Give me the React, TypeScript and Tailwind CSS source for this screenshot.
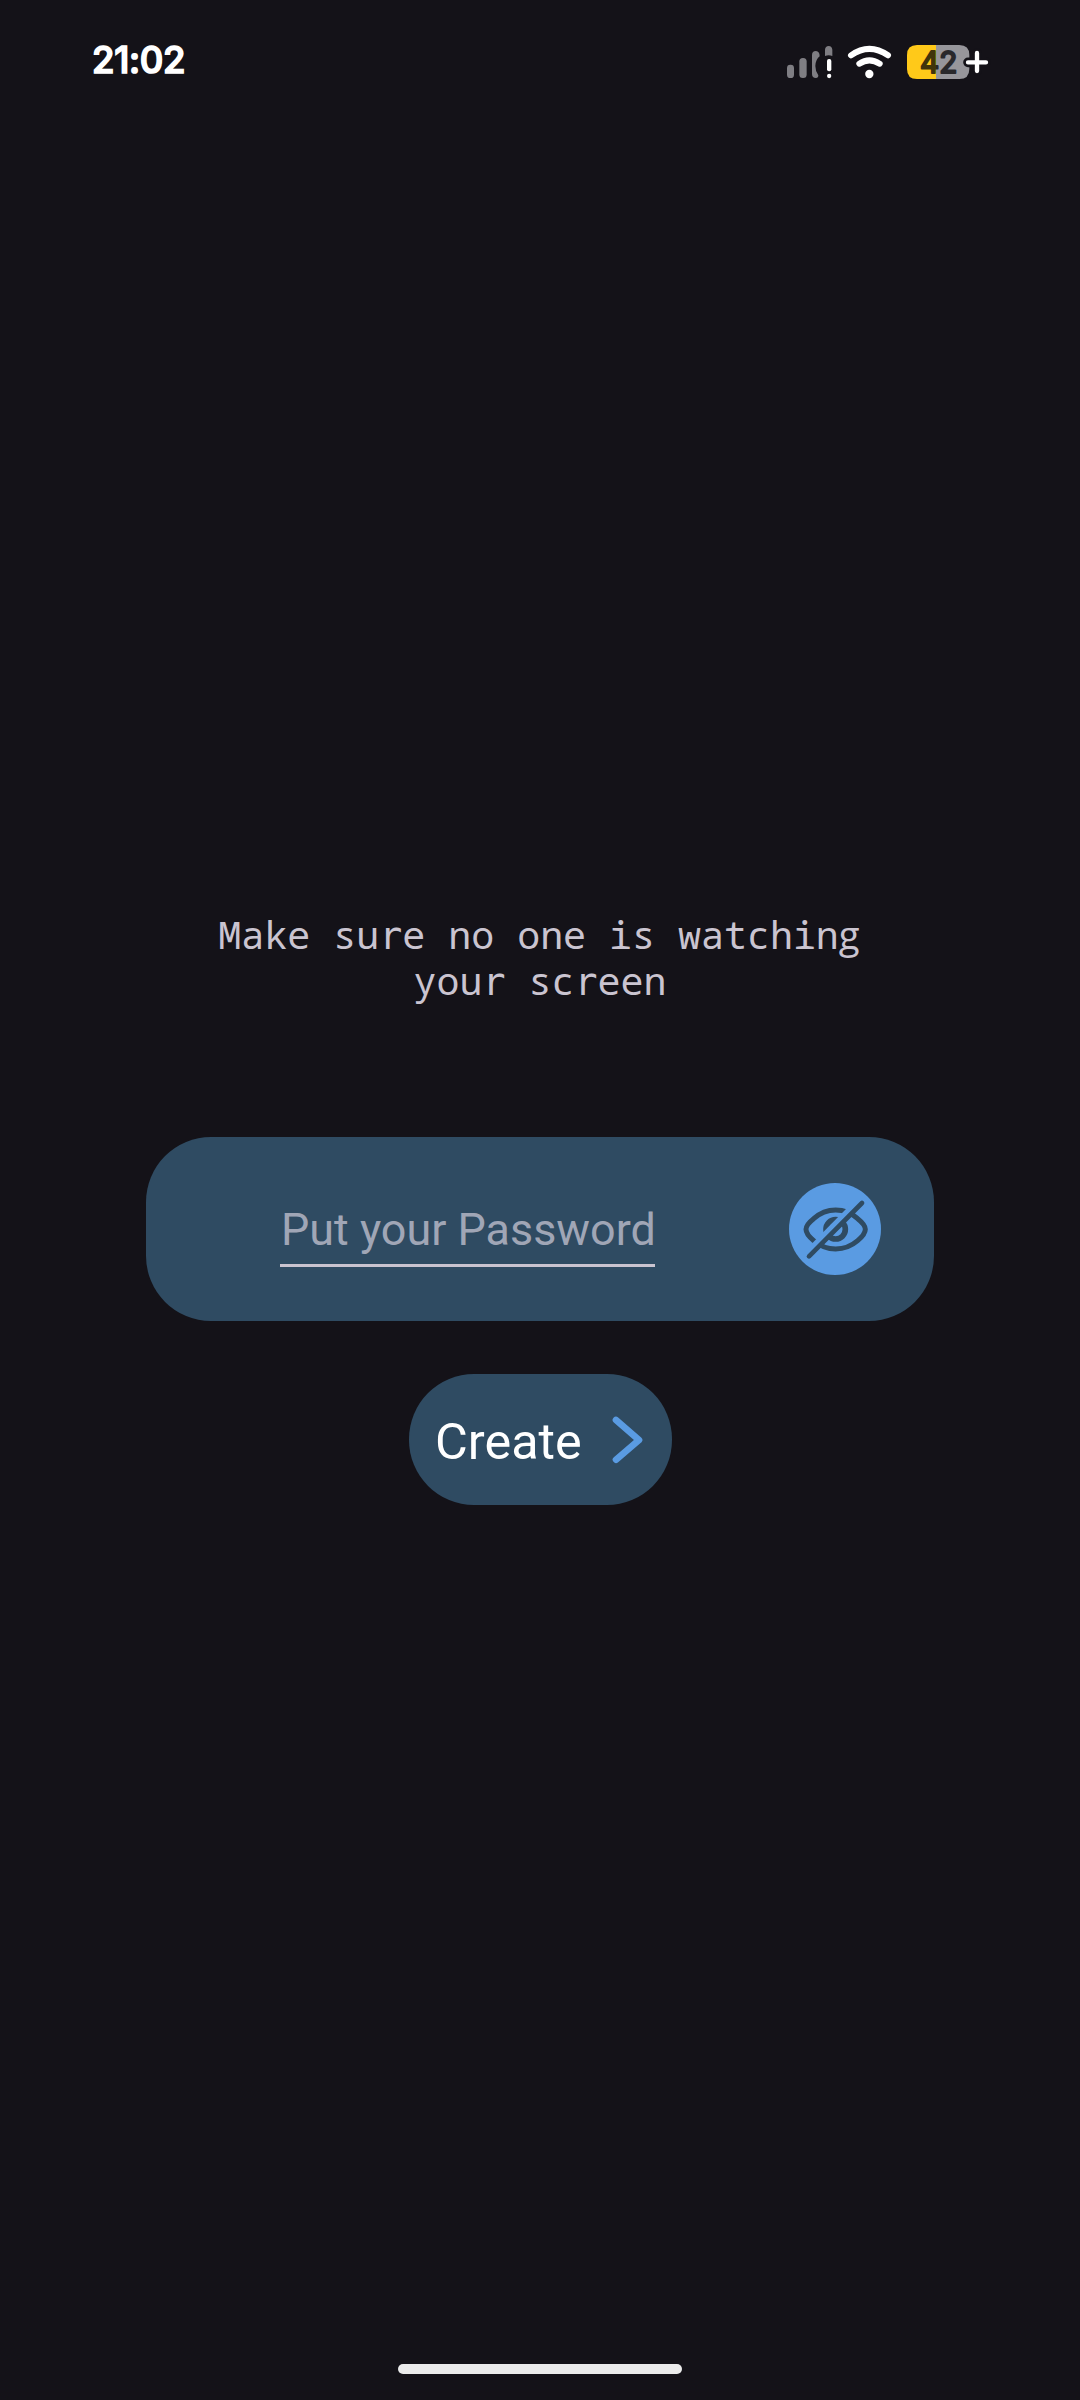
function StatusIcons() {
  return (
    <svg className="h-[65px] w-[240px]" viewBox="0 0 720 195" fill="none">
      <defs>
        <linearGradient id="level" gradientUnits="userSpaceOnUse" x1="497" y1="0" x2="499" y2="0">
          <stop offset="0" stopColor="#40340b" />
          <stop offset="1" stopColor="#29282b" />
        </linearGradient>
      </defs>
      <g fill="#7f7e83">
        <rect x="51" y="104" width="21" height="40" rx="10" />
        <rect x="88" y="84" width="22" height="60" rx="10.5" />
        <path d="M126 75Q126 63 138 63Q149 64 149 79Q137 88 136 108Q136 124 145 136Q145 144 138 144Q126 144 126 132Z" />
        <path d="M165 78V59Q166 48 176 48Q186 49 187 59V78Q176 73 165 78Z" />
      </g>
      <rect x="171" y="87" width="13" height="37" rx="6" fill="#fff" />
      <circle cx="177.500" cy="138" r="6.500" fill="#fff" />
      <path d="M243 76Q298 37 354 76" stroke="#fff" strokeWidth="18" strokeLinecap="round" />
      <path d="M268 101Q298 81 329 101" stroke="#fff" strokeWidth="18" strokeLinecap="round" />
      <circle cx="298" cy="132" r="12.500" fill="#fff" />
      <path d="M498 45H441Q411 45 411 75V117Q411 147 441 147H498Z" fill="#ffc919" />
      <path d="M498 45H568Q598 45 598 75V117Q598 147 568 147H498Z" fill="#97969b" />
      <text
        x="450"
        y="128"
        fontSize="88"
        textLength="112"
        lengthAdjust="spacingAndGlyphs"
        fontWeight="400"
        stroke="url(#level)"
        strokeWidth="6"
        strokeLinejoin="round"
        className="font-[Inter,sans-serif]"
        fill="url(#level)"
      >
        42
      </text>
      <path d="M594 97H648M621 69V123" stroke="#141218" strokeWidth="29" strokeLinecap="round" />
      <path d="M594 97H648M621 69V123" stroke="#fff" strokeWidth="13" strokeLinecap="round" />
    </svg>
  );
}

function HiddenEyeIcon() {
  return (
    <svg className="size-full" viewBox="0 0 276 276" fill="none" stroke="#2f4b62">
      <ellipse cx="140" cy="139" rx="29" ry="29" strokeWidth="17" />
      <path d="M51 139Q51 125 74 107Q103 81 140 81Q177 81 206 107Q229 125 229 139Q229 154 206 173Q177 198 140 198Q103 198 74 173Q51 154 51 139Z" strokeWidth="15" />
      <path d="M51 211L210 50" stroke="#5a9be2" strokeWidth="16" />
      <path d="M60 220L219 60" strokeWidth="14" strokeLinecap="round" />
    </svg>
  );
}

// Letters whose plain mono shapes come from other installed families.
function MonoText({ text }: { text: string }) {
  return (
    <>
      {text.split(/([rg])/).map((part, i) => {
        if (part === "r")
          return (
            <span key={i} className="font-['DejaVu_Sans_Mono',monospace] leading-none">
              r
            </span>
          );
        if (part === "g")
          return (
            <span key={i} className="font-['Open_Sans',sans-serif] leading-none tracking-[0.052em]">
              g
            </span>
          );
        return part;
      })}
    </>
  );
}

export default function App() {
  return (
    <div className="flex h-[2400px] w-[1080px] flex-col items-center bg-[#141218] font-[Roboto,sans-serif]">
      <header className="flex h-[95px] w-full items-start justify-between pt-[30px] pr-[70px] pl-[92px]">
        <span className="font-[Inter,sans-serif] text-[36.5px] leading-[61px] font-medium tracking-[-0.3px] text-white [-webkit-text-stroke:1.6px_white] [stroke-linejoin:round]">
          21:02
        </span>
        <StatusIcons />
      </header>
      <main className="flex w-full flex-col items-center pt-[816px]">
        <p className="h-[92px] text-center font-['Noto_Sans_Mono','DejaVu_Sans_Mono',monospace] text-[38.3px] leading-[46px] text-[#cac4d0]">
          <MonoText text="Make sure no one is watching" />
          <br />
          <MonoText text="your screen" />
        </p>
        <section className="mt-[134px] flex h-[184px] w-[788px] items-center justify-between rounded-[65px] bg-[#2f4b62] pr-[53px] pl-[134px]">
          <div className="mt-[2px] flex h-[74px] w-[375px] items-center border-b-[3px] border-[#cac4d0] pt-[2px] pl-px text-[44.9px] whitespace-nowrap text-[#a0a6b6]">
            Put your Password
          </div>
          <button className="size-[92px] rounded-full bg-[#5a9be2]">
            <HiddenEyeIcon />
          </button>
        </section>
        <button className="mt-[53px] ml-px flex h-[131px] w-[263px] items-center justify-between rounded-[65px] bg-[#2f4b62] pr-[29px] pl-[26px] text-[50.4px] text-white">
          <span className="pt-[4px]">Create</span>
          <svg className="h-[48px] w-[31px]" viewBox="0 0 93 144" fill="none" stroke="#5a9be2" strokeWidth="20">
            <path d="M12 12L81 72L12 131" strokeLinecap="round" strokeLinejoin="round" />
          </svg>
        </button>
      </main>
      <div className="mt-auto mb-[26px] h-[10px] w-[284px] rounded-full bg-[#ebebeb]" />
    </div>
  );
}
